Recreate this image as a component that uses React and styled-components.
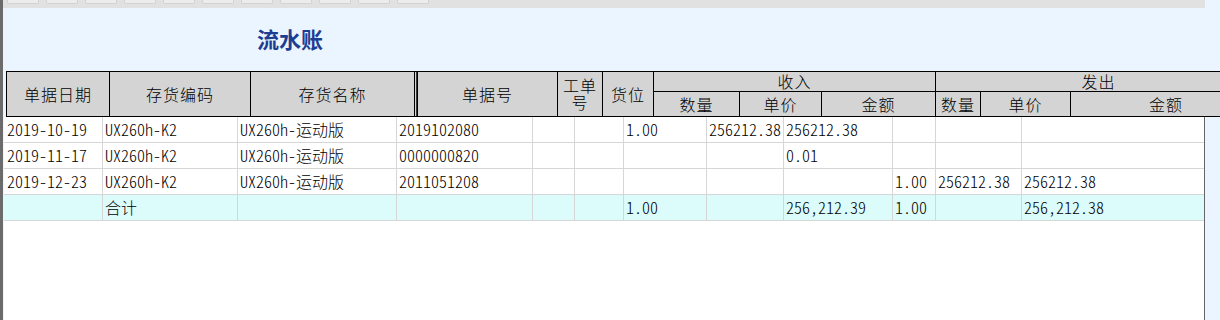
import React from "react";
import styled, { createGlobalStyle } from "styled-components";

const GlobalStyle = createGlobalStyle`
  html, body {
    margin: 0;
    padding: 0;
    background: #ebf5ff;
  }
  body {
    font-family: "Noto Sans CJK SC", "Noto Sans Mono CJK SC", "Liberation Mono", monospace;
  }
`;

const headCols = [103, 141, 164, 3, 140, 45, 51, 86, 82, 114, 45, 90, 191];
const bodyCols = [99, 135, 159, 136, 42, 49, 83, 77, 109, 43, 86, 182];

const rows = [
  ["2019-10-19", "UX260h-K2", "UX260h-运动版", "2019102080", "", "", "1.00", "256212.38", "256212.38", "", "", ""],
  ["2019-11-17", "UX260h-K2", "UX260h-运动版", "0000000820", "", "", "", "", "0.01", "", "", ""],
  ["2019-12-23", "UX260h-K2", "UX260h-运动版", "2011051208", "", "", "", "", "", "1.00", "256212.38", "256212.38"],
];
const total = ["", "合计", "", "", "", "", "1.00", "", "256,212.39", "1.00", "", "256,212.38"];

const Window = styled.div`
  display: flex;
  flex-direction: column;
  width: 1220px;
  height: 320px;
  box-sizing: border-box;
  border-left: 3px solid #6b6b6b;
  background: #ebf5ff;
  overflow: hidden;
`;

const TabStrip = styled.div`
  display: flex;
  gap: 7px;
  flex-shrink: 0;
  width: 1202px;
  height: 8px;
  padding-left: 4px;
  box-sizing: border-box;
  background: #e1e1e1;
`;

const Tab = styled.div`
  width: 32px;
  height: 4px;
  box-sizing: border-box;
  background: #ececec;
  border: 1px solid #d3d3d3;
  border-top: none;
  border-radius: 0 0 2px 2px;
`;

const TitleBar = styled.div`
  flex-shrink: 0;
  height: 63px;
  box-sizing: border-box;
  padding: 18px 0 0 254px;
`;

const Title = styled.h1`
  margin: 0;
  font-family: "Noto Sans CJK SC", sans-serif;
  font-size: 22px;
  line-height: 24px;
  font-weight: 700;
  color: #1d3d92;
`;

const HeaderGrid = styled.div`
  display: grid;
  flex-shrink: 0;
  width: max-content;
  margin-left: 3px;
  grid-template-columns: ${headCols.map((w) => `${w}px`).join(" ")};
  grid-template-rows: 20px 25px;
  border-top: 1px solid #000;
  border-left: 1px solid #000;
  background: #d4d4d4;
`;

const HeadCell = styled.div`
  grid-column: ${(p) => p.$col};
  grid-row: ${(p) => p.$row};
  display: flex;
  align-items: center;
  justify-content: center;
  box-sizing: border-box;
  border-right: 1px solid #000;
  border-bottom: 1px solid #000;
  font-family: "Noto Sans CJK SC", sans-serif;
  font-size: 16px;
  font-weight: 300;
  letter-spacing: 1px;
  line-height: 17px;
  color: #000;
  text-align: center;
  white-space: pre-line;
`;

const Splitter = styled.div`
  grid-column: 4;
  grid-row: 1 / 3;
  border-bottom: 1px solid #000;
  background: linear-gradient(to right, #d4d4d4 1px, #3a3a3a 1px, #3a3a3a 2px, #000 2px);
`;

const Body = styled.div`
  flex: 1;
  align-self: flex-start;
  margin-left: 1px;
  width: 1201px;
  box-sizing: border-box;
  border-right: 1px solid #666;
  background: #fff;
`;

const Row = styled.div`
  display: grid;
  grid-template-columns: ${bodyCols.map((w) => `${w}px`).join(" ")};
  height: 26px;
  box-sizing: border-box;
  border-bottom: 1px solid #d6d6d6;
  background: ${(p) => (p.$total ? "#dcfbfb" : "#fff")};
`;

const Cell = styled.div`
  box-sizing: border-box;
  padding-left: 2px;
  border-right: 1px solid #d6d6d6;
  font-family: "Noto Sans CJK SC", "Noto Sans Mono CJK SC", monospace;
  font-feature-settings: "hwid";
  font-size: 16px;
  font-weight: 300;
  line-height: 25px;
  color: #000;
  white-space: nowrap;
  overflow: hidden;

  &:first-child {
    padding-left: 3px;
  }
  &:last-child {
    border-right: none;
  }
`;

const heads = [
  { text: "单据日期", col: "1", row: "1 / 3" },
  { text: "存货编码", col: "2", row: "1 / 3" },
  { text: "存货名称", col: "3", row: "1 / 3" },
  { text: "单据号", col: "5", row: "1 / 3" },
  { text: "工单\n号", col: "6", row: "1 / 3" },
  { text: "货位", col: "7", row: "1 / 3" },
  { text: "收入", col: "8 / 11", row: "1" },
  { text: "数量", col: "8", row: "2" },
  { text: "单价", col: "9", row: "2" },
  { text: "金额", col: "10", row: "2" },
  { text: "发出", col: "11 / 14", row: "1" },
  { text: "数量", col: "11", row: "2" },
  { text: "单价", col: "12", row: "2" },
  { text: "金额", col: "13", row: "2" },
];

const App = () => {
  return (
    <>
      <GlobalStyle />
      <Window>
        <TabStrip>
          {Array.from({ length: 11 }, (_, i) => (
            <Tab key={i} />
          ))}
        </TabStrip>
        <TitleBar>
          <Title>流水账</Title>
        </TitleBar>
        <HeaderGrid>
          {heads.map((h, i) => (
            <HeadCell key={i} $col={h.col} $row={h.row}>
              {h.text}
            </HeadCell>
          ))}
          <Splitter />
        </HeaderGrid>
        <Body>
          {rows.map((r, i) => (
            <Row key={i}>
              {r.map((v, j) => (
                <Cell key={j}>{v}</Cell>
              ))}
            </Row>
          ))}
          <Row $total>
            {total.map((v, j) => (
              <Cell key={j}>{v}</Cell>
            ))}
          </Row>
        </Body>
      </Window>
    </>
  );
};

export default App;
